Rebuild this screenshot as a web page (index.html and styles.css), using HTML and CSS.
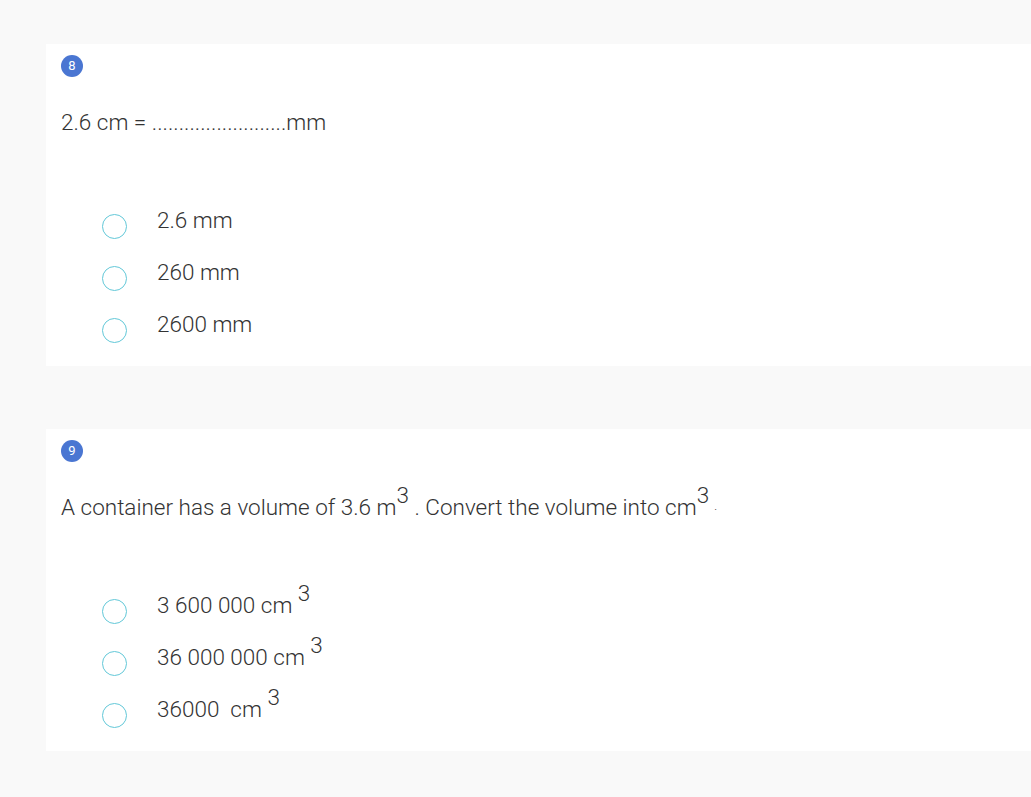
FILE: index.html
```html
<!DOCTYPE html>
<html>
<head>
<meta charset="utf-8">
<link rel="stylesheet" href="styles.css">
</head>
<body>
<div class="page">
  <section class="card">
    <div class="badge">8</div>
    <div class="question">2.6 cm = .........................mm</div>
    <div class="options">
      <div class="option"><span class="radio"></span><span class="label">2.6 mm</span></div>
      <div class="option"><span class="radio"></span><span class="label">260 mm</span></div>
      <div class="option"><span class="radio"></span><span class="label">2600 mm</span></div>
    </div>
  </section>
  <section class="card">
    <div class="badge">9</div>
    <div class="question">A container has a volume of 3.6 m<span class="sup">3</span> . Convert the volume into cm<span class="sup">3</span><span class="dot">.</span></div>
    <div class="options">
      <div class="option"><span class="radio"></span><span class="label">3 600 000 cm <span class="sup">3</span></span></div>
      <div class="option"><span class="radio"></span><span class="label">36 000 000 cm <span class="sup">3</span></span></div>
      <div class="option"><span class="radio"></span><span class="label">36000 &nbsp;cm <span class="sup">3</span></span></div>
    </div>
  </section>
</div>
</body>
</html>
```
FILE: styles.css
```css
html, body {
  margin: 0;
  padding: 0;
  background: #f9f9f9;
}
body {
  font-family: Roboto, "Liberation Sans", sans-serif;
  font-weight: 300;
  color: #333333;
}
.page {
  padding: 44px 0 0 46px;
  display: flex;
  flex-direction: column;
  gap: 63px;
}
.card {
  background: #ffffff;
  padding: 11px 0 9px 15px;
}
.badge {
  width: 22px;
  height: 22px;
  border-radius: 50%;
  background: #4a76d2;
  color: #ffffff;
  font-size: 13px;
  font-weight: 400;
  line-height: 22px;
  text-align: center;
}
.question {
  margin-top: 30px;
  font-size: 22.5px;
  line-height: 30px;
  height: 30px;
  white-space: nowrap;
}
.options {
  margin-top: 64px;
  display: flex;
  flex-direction: column;
}
.option {
  display: flex;
  align-items: flex-start;
  height: 52px;
  padding-left: 41px;
}
.radio {
  flex: none;
  width: 23px;
  height: 23px;
  margin-top: 13px;
  border: 1.5px solid #62c8d8;
  border-radius: 50%;
}
.label {
  margin-left: 30px;
  margin-top: 4px;
  font-size: 22.5px;
  line-height: 30px;
  height: 30px;
  white-space: nowrap;
}
.sup {
  vertical-align: 12px;
  line-height: 0;
}
.dot {
  font-size: 12px;
  vertical-align: 5px;
  line-height: 0;
  margin-left: 5px;
}
```
